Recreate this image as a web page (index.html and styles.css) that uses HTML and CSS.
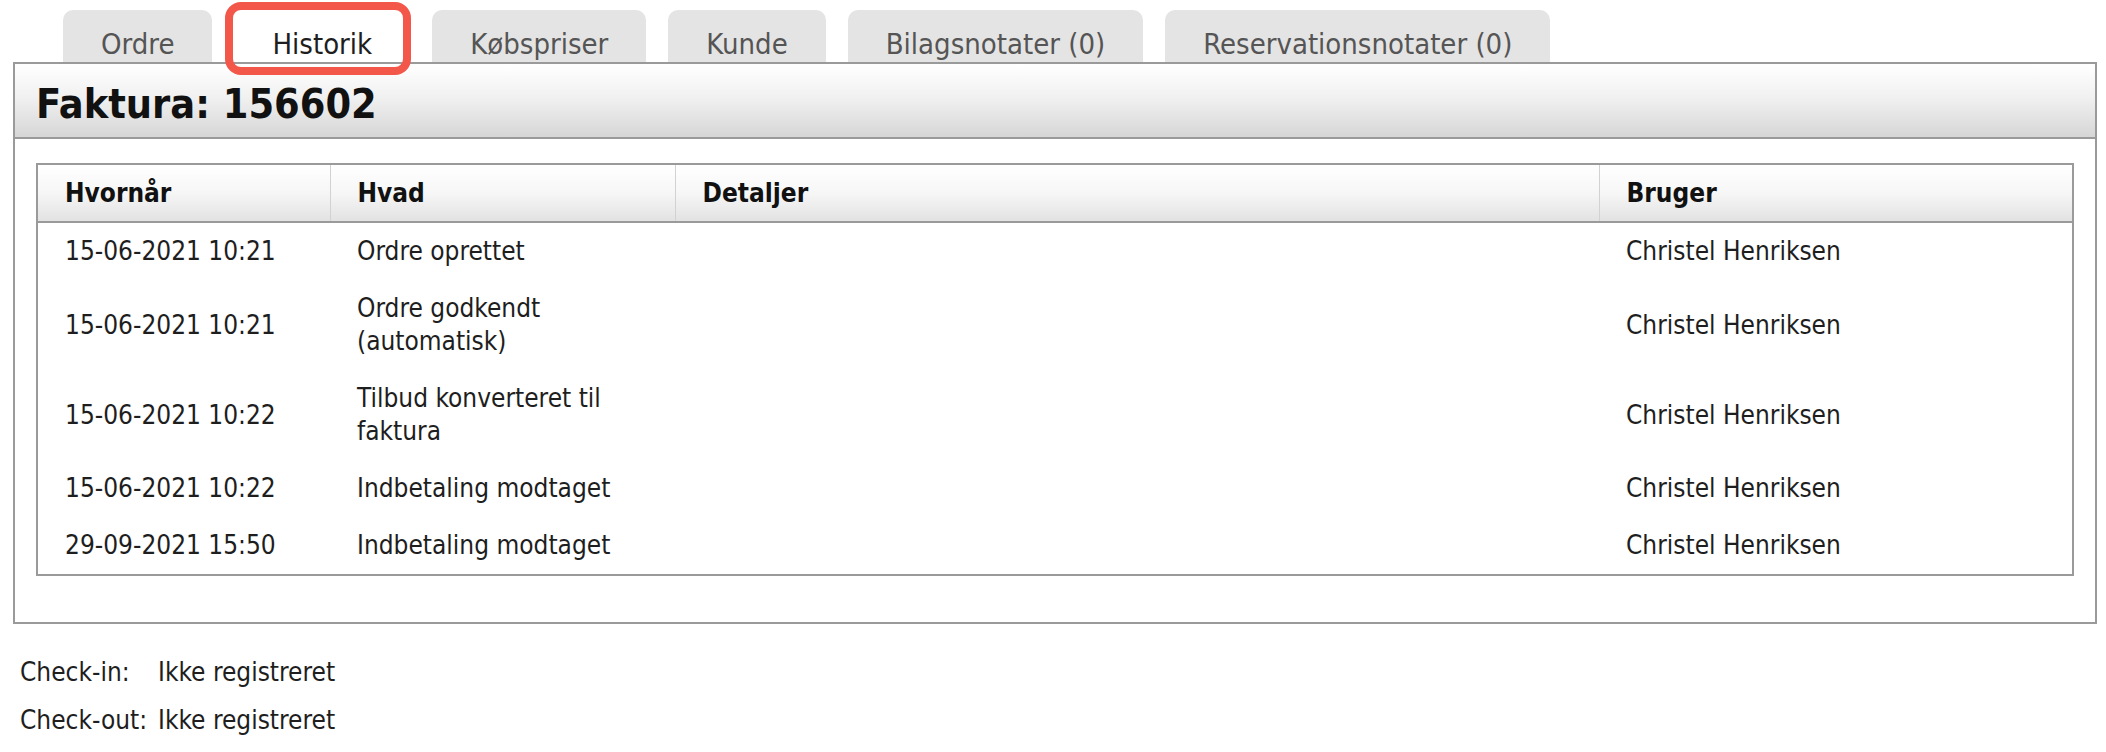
FILE: index.html
```html
<!DOCTYPE html>
<html lang="da">
<head>
    <meta charset="UTF-8">
    <meta name="viewport" content="width=device-width, initial-scale=1.0">
    <title>Faktura 156602 - Historik</title>
    <link rel="stylesheet" href="styles.css">
</head>
<body>
    <div class="page">
        <nav class="tabs">
            <a class="tab">Ordre</a>
            <a class="tab active">Historik<span class="highlight"></span></a>
            <a class="tab">Købspriser</a>
            <a class="tab">Kunde</a>
            <a class="tab">Bilagsnotater (0)</a>
            <a class="tab">Reservationsnotater (0)</a>
        </nav>

        <section class="panel">
            <div class="panel-header">
                <h1>Faktura: 156602</h1>
            </div>
            <div class="panel-body">
                <table class="history">
                    <colgroup>
                        <col class="col-when">
                        <col class="col-what">
                        <col class="col-details">
                        <col class="col-user">
                    </colgroup>
                    <thead>
                        <tr>
                            <th>Hvornår</th>
                            <th>Hvad</th>
                            <th>Detaljer</th>
                            <th>Bruger</th>
                        </tr>
                    </thead>
                    <tbody>
                        <tr>
                            <td>15-06-2021 10:21</td>
                            <td>Ordre oprettet</td>
                            <td></td>
                            <td>Christel Henriksen</td>
                        </tr>
                        <tr>
                            <td>15-06-2021 10:21</td>
                            <td>Ordre godkendt (automatisk)</td>
                            <td></td>
                            <td>Christel Henriksen</td>
                        </tr>
                        <tr>
                            <td>15-06-2021 10:22</td>
                            <td>Tilbud konverteret til faktura</td>
                            <td></td>
                            <td>Christel Henriksen</td>
                        </tr>
                        <tr>
                            <td>15-06-2021 10:22</td>
                            <td>Indbetaling modtaget</td>
                            <td></td>
                            <td>Christel Henriksen</td>
                        </tr>
                        <tr>
                            <td>29-09-2021 15:50</td>
                            <td>Indbetaling modtaget</td>
                            <td></td>
                            <td>Christel Henriksen</td>
                        </tr>
                    </tbody>
                </table>
            </div>
        </section>

        <div class="checks">
            <span class="check-label">Check-in:</span>
            <span>Ikke registreret</span>
            <span class="check-label">Check-out:</span>
            <span>Ikke registreret</span>
        </div>
    </div>
</body>
</html>
```

FILE: styles.css
```css
body {
    margin: 0;
    font-family: "DejaVu Sans Condensed", "DejaVu Sans", sans-serif;
    font-size: 26px;
    color: #1e1e1e;
    background-color: #fff;
}

.page {
    padding: 0 9px 0 13px;
}

/* tabs */

.tabs {
    display: flex;
    gap: 22px;
    padding-left: 50px;
    margin-top: 10px;
}

.tab {
    position: relative;
    height: 36px;
    line-height: 36px;
    padding: 16px 38px 0;
    background-color: #e4e4e4;
    border-radius: 10px 10px 0 0;
    font-size: 29px;
    color: #555;
    text-decoration: none;
    white-space: nowrap;
}

.tab.active {
    background-color: #fff;
    color: #1e1e1e;
}

.highlight {
    position: absolute;
    top: -8px;
    bottom: -13px;
    left: -9px;
    right: -1px;
    border: 8px solid #f2574a;
    border-radius: 16px;
    z-index: 2;
}

/* panel */

.panel {
    border: 2px solid #9a9a9a;
}

.panel-header {
    height: 73px;
    background: linear-gradient(to bottom, #ffffff 0%, #f1f1f1 45%, #d6d6d6 100%);
    border-bottom: 2px solid #9a9a9a;
    display: flex;
    align-items: center;
    padding-left: 21px;
}

.panel-header h1 {
    margin: 6px 0 0;
    font-size: 41px;
    font-weight: bold;
    color: #111;
}

.panel-body {
    padding: 24px 21px 46px;
}

/* history table */

.history {
    width: 100%;
    border-collapse: collapse;
    table-layout: fixed;
    border: 2px solid #9a9a9a;
}

.col-when { width: 293px; }
.col-what { width: 345px; }
.col-details { width: 924px; }

.history th {
    height: 56px;
    padding: 0 27px;
    text-align: left;
    font-weight: bold;
    color: #111;
    background: linear-gradient(to bottom, #ffffff 0%, #f6f6f6 50%, #e2e2e2 100%);
    border-bottom: 2px solid #9a9a9a;
    border-left: 1px solid #d2d2d2;
}

.history th:first-child {
    border-left: none;
}

.history td {
    padding: 12px 27px;
    line-height: 33px;
    vertical-align: middle;
}

/* check-in / check-out */

.checks {
    display: grid;
    grid-template-columns: 138px auto;
    line-height: 48px;
    margin-top: 24px;
    padding-left: 7px;
}
```
